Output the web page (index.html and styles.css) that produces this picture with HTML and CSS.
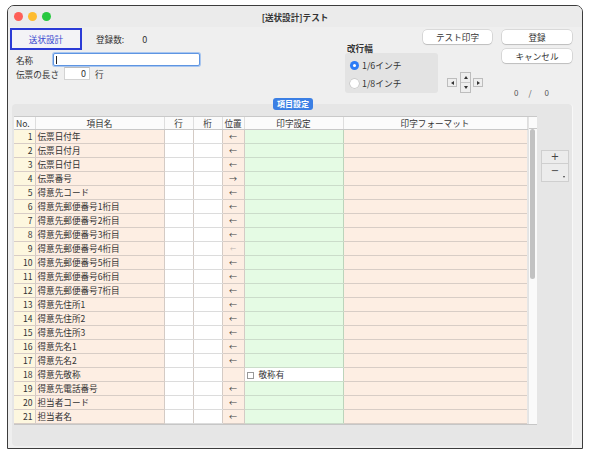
FILE: index.html
```html
<!DOCTYPE html>
<html lang="ja">
<head>
<meta charset="utf-8">
<title>[送状設計]テスト</title>
<link rel="stylesheet" href="styles.css">
</head>
<body>
<div class="window">
  <div class="titlebar">
    <div class="lights"><span class="light red"></span><span class="light yellow"></span><span class="light green"></span></div>
    <div class="title">[送状設計]テスト</div>
    <div></div>
  </div>
  <div class="top">
    <div class="left">
      <div class="row1">
        <div class="tab">送状設計</div>
        <span class="count-label">登録数:</span>
        <span class="count">0</span>
      </div>
      <div class="row2">
        <span class="lbl lbl-name">名称</span>
        <div class="name-input"><span class="caret"></span></div>
      </div>
      <div class="row3">
        <span class="lbl lbl-len">伝票の長さ</span>
        <div class="len-input">0</div>
        <span class="unit">行</span>
      </div>
    </div>
    <div class="right">
      <div class="btnrow">
        <div class="btn btn-test">テスト印字</div>
        <div class="btn btn-reg">登録</div>
      </div>
      <div class="row-b">
        <div class="kaigyo">
          <div class="kg-label">改行幅</div>
          <div class="kg-box">
            <div class="radio-row"><span class="radio on"></span>1/6インチ</div>
            <div class="radio-row"><span class="radio"></span>1/8インチ</div>
          </div>
        </div>
        <div class="stepper">
          <div class="st-side"><span class="tri-l"></span></div>
          <div class="st-mid">
            <div class="st-half"><span class="tri-u"></span></div>
            <div class="st-half st-low"><span class="tri-d"></span></div>
          </div>
          <div class="st-side st-right"><span class="tri-r"></span></div>
        </div>
        <div class="rcol">
          <div class="btn btn-cancel">キャンセル</div>
          <div class="counter"><span class="c1">0</span><span class="c2">/</span><span class="c3">0</span></div>
        </div>
      </div>
    </div>
  </div>
  <div class="panel">
    <div class="pill">項目設定</div>
    <div class="panel-inner">
      <div class="grid-wrap">
        <table class="grid">
          <colgroup>
            <col class="w-no"><col class="w-name"><col class="w-gyo"><col class="w-keta"><col class="w-pos"><col class="w-set"><col class="w-fmt">
          </colgroup>
          <thead>
            <tr class="hrow"><th class="h-no">No.</th><th>項目名</th><th>行</th><th>桁</th><th>位置</th><th>印字設定</th><th>印字フォーマット</th></tr>
          </thead>
          <tbody>
            <tr><td class="no">1</td><td class="nm">伝票日付年</td><td class="wh"></td><td class="wh"></td><td class="pos">←</td><td class="set"></td><td class="fmt"></td></tr>
            <tr><td class="no">2</td><td class="nm">伝票日付月</td><td class="wh"></td><td class="wh"></td><td class="pos">←</td><td class="set"></td><td class="fmt"></td></tr>
            <tr><td class="no">3</td><td class="nm">伝票日付日</td><td class="wh"></td><td class="wh"></td><td class="pos">←</td><td class="set"></td><td class="fmt"></td></tr>
            <tr><td class="no">4</td><td class="nm">伝票番号</td><td class="wh"></td><td class="wh"></td><td class="pos">→</td><td class="set"></td><td class="fmt"></td></tr>
            <tr><td class="no">5</td><td class="nm">得意先コード</td><td class="wh"></td><td class="wh"></td><td class="pos">←</td><td class="set"></td><td class="fmt"></td></tr>
            <tr><td class="no">6</td><td class="nm">得意先郵便番号1桁目</td><td class="wh"></td><td class="wh"></td><td class="pos">←</td><td class="set"></td><td class="fmt"></td></tr>
            <tr><td class="no">7</td><td class="nm">得意先郵便番号2桁目</td><td class="wh"></td><td class="wh"></td><td class="pos">←</td><td class="set"></td><td class="fmt"></td></tr>
            <tr><td class="no">8</td><td class="nm">得意先郵便番号3桁目</td><td class="wh"></td><td class="wh"></td><td class="pos">←</td><td class="set"></td><td class="fmt"></td></tr>
            <tr><td class="no">9</td><td class="nm">得意先郵便番号4桁目</td><td class="wh"></td><td class="wh"></td><td class="pos faint">←</td><td class="set"></td><td class="fmt"></td></tr>
            <tr><td class="no">10</td><td class="nm">得意先郵便番号5桁目</td><td class="wh"></td><td class="wh"></td><td class="pos">←</td><td class="set"></td><td class="fmt"></td></tr>
            <tr><td class="no">11</td><td class="nm">得意先郵便番号6桁目</td><td class="wh"></td><td class="wh"></td><td class="pos">←</td><td class="set"></td><td class="fmt"></td></tr>
            <tr><td class="no">12</td><td class="nm">得意先郵便番号7桁目</td><td class="wh"></td><td class="wh"></td><td class="pos">←</td><td class="set"></td><td class="fmt"></td></tr>
            <tr><td class="no">13</td><td class="nm">得意先住所1</td><td class="wh"></td><td class="wh"></td><td class="pos">←</td><td class="set"></td><td class="fmt"></td></tr>
            <tr><td class="no">14</td><td class="nm">得意先住所2</td><td class="wh"></td><td class="wh"></td><td class="pos">←</td><td class="set"></td><td class="fmt"></td></tr>
            <tr><td class="no">15</td><td class="nm">得意先住所3</td><td class="wh"></td><td class="wh"></td><td class="pos">←</td><td class="set"></td><td class="fmt"></td></tr>
            <tr><td class="no">16</td><td class="nm">得意先名1</td><td class="wh"></td><td class="wh"></td><td class="pos">←</td><td class="set"></td><td class="fmt"></td></tr>
            <tr><td class="no">17</td><td class="nm">得意先名2</td><td class="wh"></td><td class="wh"></td><td class="pos">←</td><td class="set"></td><td class="fmt"></td></tr>
            <tr><td class="no">18</td><td class="nm">得意先敬称</td><td class="wh"></td><td class="wh"></td><td class="pos"></td><td class="set set-white"><span class="chk"></span>敬称有</td><td class="fmt"></td></tr>
            <tr><td class="no">19</td><td class="nm">得意先電話番号</td><td class="wh"></td><td class="wh"></td><td class="pos">←</td><td class="set"></td><td class="fmt"></td></tr>
            <tr><td class="no">20</td><td class="nm">担当者コード</td><td class="wh"></td><td class="wh"></td><td class="pos">←</td><td class="set"></td><td class="fmt"></td></tr>
            <tr><td class="no">21</td><td class="nm">担当者名</td><td class="wh"></td><td class="wh"></td><td class="pos">←</td><td class="set"></td><td class="fmt"></td></tr>
          </tbody>
        </table>
        <div class="scroll">
          <div class="scroll-head"></div>
          <div class="track"><div class="thumb"></div></div>
        </div>
      </div>
      <div class="pm">
        <div class="pm-btn pm-plus">+</div>
        <div class="pm-btn pm-minus">−<span class="pm-tri"></span></div>
      </div>
    </div>
  </div>
</div>
</body>
</html>
```

FILE: styles.css
```css
* { box-sizing: border-box; }
html, body { margin: 0; padding: 0; background: #ffffff; }
body {
  font-family: "Noto Sans CJK JP", "Noto Sans", sans-serif;
  font-size: 9px;
  color: #333333;
  width: 595px;
  height: 459px;
  overflow: hidden;
}

.window {
  margin: 5px 0 0 7px;
  width: 576px;
  height: 444px;
  border: 1px solid #3c3c3c;
  border-radius: 7px 7px 0 0;
  background: #efefef;
  overflow: hidden;
}

/* title bar */
.titlebar {
  height: 21px;
  display: grid;
  grid-template-columns: 1fr auto 1fr;
  align-items: center;
  background: #ebebeb;
}
.lights { display: flex; gap: 5px; padding-left: 6px; }
.light { width: 9px; height: 9px; border-radius: 50%; display: block; }
.red { background: #fe5f57; }
.yellow { background: #febc2e; }
.green { background: #28c840; }
.title { font-size: 8.6px; font-weight: bold; color: #333; line-height: 10px; }

/* top area */
.top { height: 77px; display: flex; }
.left { margin-left: 2px; width: 333px; }
.row1 { margin-top: 1px; height: 22px; display: flex; align-items: center; }
.tab {
  width: 72px; height: 22px;
  border: 2px solid #2b3bd6;
  color: #3a4ad0;
  font-size: 8.6px;
  display: flex; align-items: center; justify-content: center;
  background: #f3f3f6;
}
.count-label { margin-left: 14px; font-size: 8.6px; }
.count { margin-left: 18px; font-size: 9px; }

.row2 { margin-top: 3px; height: 13px; display: flex; align-items: center; }
.lbl { margin-left: 6px; font-size: 8.6px; line-height: 10px; }
.lbl-name { width: 37px; }
.lbl-len { width: 48px; }
.name-input {
  width: 147px; height: 13px;
  background: #ffffff;
  border: 1px solid #5e95e2;
  box-shadow: 0 0 0 1px #a9c6ef;
  border-radius: 2px;
  padding: 2px 0 0 2px;
}
.caret { display: block; width: 1px; height: 8px; background: #222; }
.row3 { margin-top: 1px; height: 13px; display: flex; align-items: center; }
.len-input {
  width: 26px; height: 13px;
  background: #ffffff;
  border: 1px solid #d3d3d3;
  border-top-color: #bdbdbd;
  text-align: right;
  padding-right: 3px;
  line-height: 11px;
  font-size: 9px;
}
.unit { margin-left: 5px; font-size: 8.6px; }

.right { width: 238px; display: flex; flex-direction: column; }
.btnrow { margin-top: 3px; height: 14px; display: flex; }
.btn {
  height: 14px;
  background: #ffffff;
  border-radius: 4px;
  box-shadow: 0 0 0 0.5px rgba(0,0,0,0.18), 0 1px 1px rgba(0,0,0,0.12);
  font-size: 8.6px;
  line-height: 14px;
  text-align: center;
  color: #333;
}
.btn-test { margin-left: 80px; width: 69px; }
.btn-reg { margin-left: 10px; width: 70px; }

.row-b { display: flex; }
.kaigyo { width: 95px; }
.kg-label { margin: -1px 0 0 4px; height: 10px; line-height: 10px; font-size: 8.6px; font-weight: bold; }
.kg-box {
  margin-left: 2px;
  width: 93px; height: 40px;
  background: #e3e3e3;
  border-radius: 3px;
  padding-top: 3px;
}
.radio-row { height: 18px; display: flex; align-items: center; padding-left: 5px; font-size: 8.8px; color: #333; }
.radio {
  width: 9px; height: 9px; border-radius: 50%;
  background: #ffffff;
  box-shadow: 0 0 0 0.5px rgba(0,0,0,0.2);
  margin-right: 3px;
  display: flex; align-items: center; justify-content: center;
}
.radio.on { background: #2d7cf6; box-shadow: none; }
.radio.on::after { content: ""; width: 3px; height: 3px; border-radius: 50%; background: #fff; }

.stepper { margin: 28px 0 0 9px; width: 37px; height: 21px; display: flex; align-items: center; }
.st-side {
  width: 10px; height: 9px;
  border: 1px solid #bdbdbd;
  background: #eeeeee;
  display: flex; align-items: center; justify-content: center;
}
.st-right { margin-left: 2px; }
.st-mid {
  margin-left: 3px;
  width: 11px; height: 21px;
  border: 1px solid #bdbdbd;
  background: #eeeeee;
  display: flex; flex-direction: column;
}
.st-half { flex: 1; display: flex; align-items: center; justify-content: center; }
.st-low { border-top: 1px solid #c8c8c8; }
.tri-l { width: 0; height: 0; border-top: 2px solid transparent; border-bottom: 2px solid transparent; border-right: 3px solid #333; }
.tri-r { width: 0; height: 0; border-top: 2px solid transparent; border-bottom: 2px solid transparent; border-left: 3px solid #333; }
.tri-u { width: 0; height: 0; border-left: 2px solid transparent; border-right: 2px solid transparent; border-bottom: 3px solid #333; }
.tri-d { width: 0; height: 0; border-left: 2px solid transparent; border-right: 2px solid transparent; border-top: 3px solid #333; }

.rcol { margin-left: 18px; width: 70px; }
.btn-cancel { margin-top: 5px; }
.counter { margin-top: 25px; height: 10px; line-height: 10px; display: flex; font-size: 8px; color: #555; }
.c1 { margin-left: 12px; }
.c2 { margin-left: 10px; }
.c3 { margin-left: 13px; }

/* panel */
.panel {
  position: relative;
  margin-left: 4px;
  width: 561px;
  height: 342px;
  background: #e6e6e6;
  border-radius: 4px;
  border-right: 1px solid #f8f8f8;
}
.pill {
  position: absolute;
  top: -6px; left: 261px;
  width: 40px; height: 12px;
  background: #3b7fe4;
  color: #ffffff;
  border-radius: 3px;
  font-size: 8px;
  font-weight: bold;
  line-height: 12px;
  text-align: center;
}
.panel-inner { padding: 12px 0 0 2px; display: flex; align-items: flex-start; }
.grid-wrap { display: flex; width: 523px; border-top: 1px solid #c9c9c9; border-bottom: 1px solid #c6c6c6; }

.grid { border-collapse: collapse; table-layout: fixed; width: 513px; }
.w-no { width: 21px; }
.w-name { width: 129px; }
.w-gyo { width: 29px; }
.w-keta { width: 29px; }
.w-pos { width: 22px; }
.w-set { width: 99px; }
.w-fmt { width: 184px; }

.grid tr.hrow { height: 12px; }
.grid th {
  height: 12px;
  padding: 1px 0 0 0;
  font-size: 8.6px;
  font-weight: normal;
  line-height: 10px;
  color: #333;
  background: #fbfbfb;
  border-right: 1px solid #dedede;
  border-bottom: 1px solid #c8c8c8;
  text-align: center;
  vertical-align: middle;
}
.grid th.h-no { text-align: left; padding-left: 2px; }
.grid tbody tr { height: 14px; }
.grid td {
  height: 14px;
  padding: 0;
  font-size: 8.6px;
  line-height: 13px;
  color: #333;
  border-bottom: 1px solid #d8cdc6;
  border-right: 1px solid #d4cbc5;
  white-space: nowrap;
  overflow: hidden;
}
.grid td.no { background: #fdf7df; text-align: right; padding-right: 2px; }
.grid td.nm { background: #fdeee3; padding-left: 2px; }
.grid td.wh { background: #ffffff; border-bottom-color: #dcdcdc; }
.grid td.pos { background: #fdeee3; text-align: center; font-size: 8px; color: #444; }
.grid td.pos.faint { color: #b8b0ab; font-size: 6px; }
.grid td.set { background: #e5fbe4; border-bottom-color: #cbdcca; border-right-color: #bcd4bb; }
.grid td.set-white { background: #ffffff; padding-left: 2px; }
.grid td.fmt { background: #fdeee3; border-right: none; }
.chk {
  display: inline-block;
  width: 7px; height: 7px;
  border: 1px solid #999;
  background: #fff;
  margin-right: 5px;
  vertical-align: -1px;
}

.scroll { width: 10px; background: #fafafa; border-left: 1px solid #e3e3e3; }
.scroll-head { height: 12px; background: #fbfbfb; border-bottom: 1px solid #c8c8c8; }
.track { padding-left: 1px; }
.thumb { width: 5px; height: 150px; background: #c2c2c2; border-radius: 3px; }

.pm { margin: 34px 0 0 4px; width: 28px; }
.pm-btn {
  border: 1px solid #cfcfcf;
  background: #ececec;
  text-align: center;
  color: #444;
  font-family: "DejaVu Sans", sans-serif;
  font-size: 10px;
  position: relative;
}
.pm-plus { height: 14px; line-height: 12px; }
.pm-minus { height: 18px; line-height: 14px; border-top: none; }
.pm-tri {
  position: absolute;
  right: 3px; bottom: 3px;
  width: 0; height: 0;
  border-left: 1.5px solid transparent;
  border-right: 1.5px solid transparent;
  border-top: 2px solid #444;
}
```
